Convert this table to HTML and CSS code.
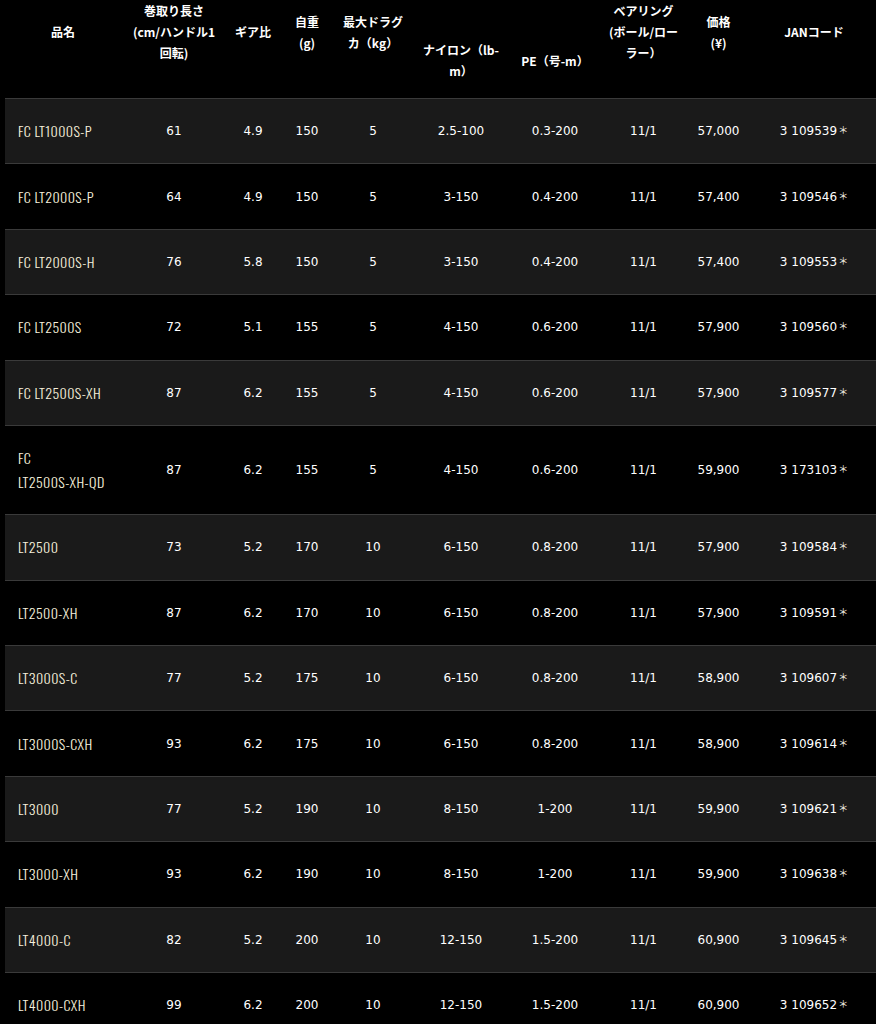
FILE: index.html
```html
<!DOCTYPE html>
<html lang="ja">
<head>
<meta charset="utf-8">
<title>スペック</title>
<link rel="stylesheet" href="styles.css">
</head>
<body>
<div class="spec">
<table class="spec-table">
<colgroup>
<col class="c-name"><col class="c-len"><col class="c-gear"><col class="c-wt"><col class="c-drag"><col class="c-ny"><col class="c-pe"><col class="c-br"><col class="c-price"><col class="c-jan">
</colgroup>
<thead>
<tr>
<th>品名</th>
<th>巻取り長さ<br>(cm/ハンドル1<br>回転)</th>
<th>ギア比</th>
<th>自重<br>(g)</th>
<th>最大ドラグ<br>カ（kg）</th>
<th class="low">ナイロン（lb-<br>m）</th>
<th class="low">PE（号-m）</th>
<th>ベアリング<br>(ボール/ロー<br>ラー）</th>
<th>価格<br>(¥)</th>
<th class="jan">JANコード</th>
</tr>
</thead>
<tbody>
<tr><td class="name">FC LT1000S-P</td><td>61</td><td>4.9</td><td>150</td><td>5</td><td>2.5-100</td><td>0.3-200</td><td>11/1</td><td>57,000</td><td class="jan">3 109539<span class="mark">＊</span></td></tr>
<tr><td class="name">FC LT2000S-P</td><td>64</td><td>4.9</td><td>150</td><td>5</td><td>3-150</td><td>0.4-200</td><td>11/1</td><td>57,400</td><td class="jan">3 109546<span class="mark">＊</span></td></tr>
<tr><td class="name">FC LT2000S-H</td><td>76</td><td>5.8</td><td>150</td><td>5</td><td>3-150</td><td>0.4-200</td><td>11/1</td><td>57,400</td><td class="jan">3 109553<span class="mark">＊</span></td></tr>
<tr><td class="name">FC LT2500S</td><td>72</td><td>5.1</td><td>155</td><td>5</td><td>4-150</td><td>0.6-200</td><td>11/1</td><td>57,900</td><td class="jan">3 109560<span class="mark">＊</span></td></tr>
<tr><td class="name">FC LT2500S-XH</td><td>87</td><td>6.2</td><td>155</td><td>5</td><td>4-150</td><td>0.6-200</td><td>11/1</td><td>57,900</td><td class="jan">3 109577<span class="mark">＊</span></td></tr>
<tr><td class="name">FC <span class="code">LT2500S-XH-QD</span></td><td>87</td><td>6.2</td><td>155</td><td>5</td><td>4-150</td><td>0.6-200</td><td>11/1</td><td>59,900</td><td class="jan">3 173103<span class="mark">＊</span></td></tr>
<tr><td class="name">LT2500</td><td>73</td><td>5.2</td><td>170</td><td>10</td><td>6-150</td><td>0.8-200</td><td>11/1</td><td>57,900</td><td class="jan">3 109584<span class="mark">＊</span></td></tr>
<tr><td class="name">LT2500-XH</td><td>87</td><td>6.2</td><td>170</td><td>10</td><td>6-150</td><td>0.8-200</td><td>11/1</td><td>57,900</td><td class="jan">3 109591<span class="mark">＊</span></td></tr>
<tr><td class="name">LT3000S-C</td><td>77</td><td>5.2</td><td>175</td><td>10</td><td>6-150</td><td>0.8-200</td><td>11/1</td><td>58,900</td><td class="jan">3 109607<span class="mark">＊</span></td></tr>
<tr><td class="name">LT3000S-CXH</td><td>93</td><td>6.2</td><td>175</td><td>10</td><td>6-150</td><td>0.8-200</td><td>11/1</td><td>58,900</td><td class="jan">3 109614<span class="mark">＊</span></td></tr>
<tr><td class="name">LT3000</td><td>77</td><td>5.2</td><td>190</td><td>10</td><td>8-150</td><td>1-200</td><td>11/1</td><td>59,900</td><td class="jan">3 109621<span class="mark">＊</span></td></tr>
<tr><td class="name">LT3000-XH</td><td>93</td><td>6.2</td><td>190</td><td>10</td><td>8-150</td><td>1-200</td><td>11/1</td><td>59,900</td><td class="jan">3 109638<span class="mark">＊</span></td></tr>
<tr><td class="name">LT4000-C</td><td>82</td><td>5.2</td><td>200</td><td>10</td><td>12-150</td><td>1.5-200</td><td>11/1</td><td>60,900</td><td class="jan">3 109645<span class="mark">＊</span></td></tr>
<tr><td class="name">LT4000-CXH</td><td>99</td><td>6.2</td><td>200</td><td>10</td><td>12-150</td><td>1.5-200</td><td>11/1</td><td>60,900</td><td class="jan">3 109652<span class="mark">＊</span></td></tr>
</tbody>
</table>
</div>
</body>
</html>
```
FILE: styles.css
```css
html, body {
  margin: 0;
  padding: 0;
  background: #000;
}

body {
  overflow: hidden;
  color: #fff;
  font-family: "DejaVu Sans", "Noto Sans CJK JP", sans-serif;
  font-size: 12px;
}

.spec {
  padding-left: 5px;
}

.spec-table {
  width: 871px;
  table-layout: fixed;
  border-collapse: collapse;
  border-spacing: 0;
}

.c-name { width: 116px; }
.c-len { width: 106px; }
.c-gear { width: 52px; }
.c-wt { width: 56px; }
.c-drag { width: 76px; }
.c-ny { width: 100px; }
.c-pe { width: 88px; }
.c-br { width: 89px; }
.c-price { width: 61px; }
.c-jan { width: 127px; }

.spec-table th {
  height: 98px;
  padding: 0 0 35px;
  box-sizing: border-box;
  vertical-align: middle;
  text-align: center;
  font-family: "Noto Sans CJK JP", sans-serif;
  font-weight: 700;
  font-size: 12px;
  line-height: 21px;
  color: #fff;
}

.spec-table th.low {
  padding: 22px 0 0;
}

.spec-table th.jan,
.spec-table td.jan {
  padding-left: 3px;
}

.spec-table tbody tr {
  border-top: 1px solid #3a3a3a;
}

.spec-table tbody tr:nth-child(odd) {
  background: #1a1a1a;
}

.spec-table td {
  padding: 20.2px 0;
  text-align: center;
  vertical-align: middle;
  line-height: 24px;
  white-space: nowrap;
}

.spec-table td.name {
  text-align: left;
  padding-left: 13px;
  padding-right: 8px;
  white-space: normal;
  font-family: "Oswald", "Roboto Condensed", "DejaVu Sans Condensed", sans-serif;
  font-weight: 300;
  font-size: 14px;
  letter-spacing: 0.4px;
  color: #f6f0dc;
}

.code {
  white-space: nowrap;
}

.mark {
  font-family: "Noto Sans CJK JP", sans-serif;
  font-size: 10px;
  line-height: 0;
  color: #f0ebe0;
  margin-left: 1px;
  vertical-align: 1px;
}
```
